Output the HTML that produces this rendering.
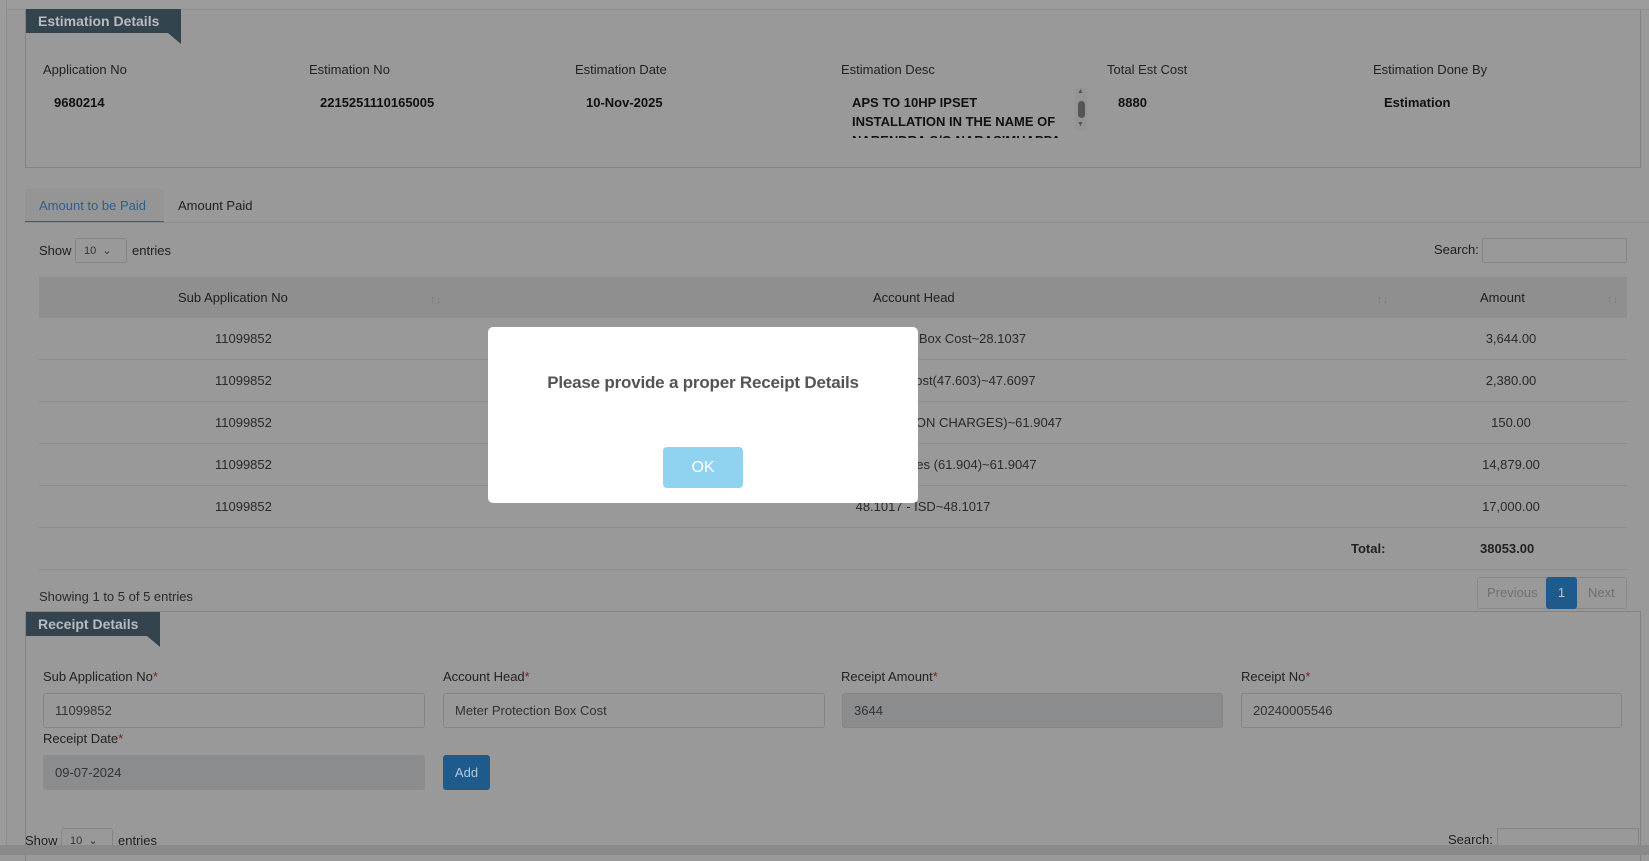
<!DOCTYPE html>
<html><head><meta charset="utf-8"><style>
*{box-sizing:border-box;margin:0;padding:0}
body{width:1649px;height:855px;overflow:hidden;background:#999;font-family:"Liberation Sans",sans-serif;font-size:13px;color:#1e1e1e;position:relative}
.a{position:absolute}
.hdr{background:#34444f;color:#b8bcc0;font-weight:bold;font-size:14px;padding:1px 12px;height:24px;line-height:22px}
.tri{width:0;height:0;border-top:11px solid #34444f;border-left:13px solid transparent}
.lbl{font-size:13px;color:#222}
.val{font-weight:bold;font-size:13px;color:#111}
.inp{border:1px solid #858585;border-radius:3px;height:35px;line-height:33px;padding-left:11px;color:#333;font-size:13px}
.dis{background:#8b8c8e}
.req{color:#8a1a1a}
.row{border-bottom:1px solid #8c8c8c}
.cell{color:#2a2a2a}
.ah{position:absolute;left:620px;width:528px;text-align:center;top:13px;color:#2a2a2a}
.am{position:absolute;left:1400px;width:144px;text-align:center;top:13px;color:#2a2a2a}
.sort{color:#7a7a7a;font-size:11px}
</style></head><body>
<div class="a" style="left:0;top:0;width:1649px;height:10px;background:#9c9c9c;border-bottom:1px solid #8e8e8e"></div>
<div class="a" style="left:0;top:0;width:7px;height:855px;background:#9c9c9c;border-right:1px solid #8e8e8e"></div>

<div class="a" style="left:25px;top:10px;width:1616px;height:158px;border:1px solid #838383;border-top:none"></div>
<div class="a hdr" style="left:26px;top:9px;width:155px">Estimation Details</div>
<div class="a tri" style="left:168px;top:33px"></div>

<div class="a lbl" style="left:43px;top:62px">Application No</div>
<div class="a lbl" style="left:309px;top:62px">Estimation No</div>
<div class="a lbl" style="left:575px;top:62px">Estimation Date</div>
<div class="a lbl" style="left:841px;top:62px">Estimation Desc</div>
<div class="a lbl" style="left:1107px;top:62px">Total Est Cost</div>
<div class="a lbl" style="left:1373px;top:62px">Estimation Done By</div>
<div class="a val" style="left:54px;top:95px">9680214</div>
<div class="a val" style="left:320px;top:95px">2215251110165005</div>
<div class="a val" style="left:586px;top:95px">10-Nov-2025</div>
<div class="a val" style="left:852px;top:93px;width:210px;height:45px;overflow:hidden;line-height:19px">APS TO 10HP IPSET INSTALLATION IN THE NAME OF NARENDRA S/O NARASIMHAPPA</div>
<div class="a" style="left:1075px;top:88px;width:12px;height:42px;background:#949494"></div>
<div class="a" style="left:1077px;top:88px;color:#555;font-size:7px">▲</div>
<div class="a" style="left:1078px;top:101px;width:7px;height:17px;background:#555;border-radius:4px"></div>
<div class="a" style="left:1077px;top:121px;color:#555;font-size:7px">▼</div>
<div class="a val" style="left:1118px;top:95px">8880</div>
<div class="a val" style="left:1384px;top:95px">Estimation</div>

<div class="a" style="left:25px;top:189px;width:139px;height:34px;background:#959595;border-bottom:2px solid #2d5f8f"></div>
<div class="a" style="left:39px;top:198px;color:#2d5f8f">Amount to be Paid</div>
<div class="a" style="left:178px;top:198px;color:#222">Amount Paid</div>
<div class="a" style="left:25px;top:222px;width:1624px;height:1px;background:#8c8c8c"></div>

<div class="a" style="left:39px;top:243px">Show</div>
<div class="a" style="left:75px;top:238px;width:52px;height:25px;border:1px solid #858585;border-radius:3px;font-size:11px;color:#333;padding:5px 8px">10 &nbsp;⌄</div>
<div class="a" style="left:132px;top:243px">entries</div>
<div class="a" style="left:1434px;top:242px">Search:</div>
<div class="a" style="left:1482px;top:238px;width:145px;height:25px;border:1px solid #858585;border-radius:2px"></div>

<div class="a" style="left:39px;top:277px;width:1588px;height:41px;background:#8f8f8f"></div>
<div class="a" style="left:178px;top:290px">Sub Application No</div>
<div class="a sort" style="left:430px;top:294px">↑↓</div>
<div class="a" style="left:873px;top:290px">Account Head</div>
<div class="a sort" style="left:1377px;top:294px">↑↓</div>
<div class="a" style="left:1480px;top:290px">Amount</div>
<div class="a sort" style="left:1607px;top:294px">↑↓</div>

<div class="a" style="left:39px;top:318px;width:1588px">
 <div class="row" style="height:42px;position:relative"><span class="a cell" style="left:176px;top:13px">11099852</span><span class="ah">Meter Protection Box Cost~28.1037</span><span class="am">3,644.00</span></div>
 <div class="row" style="height:42px;position:relative"><span class="a cell" style="left:176px;top:13px">11099852</span><span class="ah">47.6097 - Meter Cost(47.603)~47.6097</span><span class="am">2,380.00</span></div>
 <div class="row" style="height:42px;position:relative"><span class="a cell" style="left:176px;top:13px">11099852</span><span class="ah">61.9047 - (SUPERVISION CHARGES)~61.9047</span><span class="am">150.00</span></div>
 <div class="row" style="height:42px;position:relative"><span class="a cell" style="left:176px;top:13px">11099852</span><span class="ah">Supervision Charges (61.904)~61.9047</span><span class="am">14,879.00</span></div>
 <div class="row" style="height:42px;position:relative"><span class="a cell" style="left:176px;top:13px">11099852</span><span class="ah">48.1017 - ISD~48.1017</span><span class="am">17,000.00</span></div>
 <div class="row" style="height:42px;position:relative"><span class="a val" style="left:1312px;top:13px;color:#222">Total:</span><span class="a val" style="left:1441px;top:13px;color:#222">38053.00</span></div>
</div>

<div class="a" style="left:39px;top:589px;color:#2a2a2a">Showing 1 to 5 of 5 entries</div>
<div class="a" style="left:1477px;top:577px;width:150px;height:32px;border:1px solid #888;border-radius:3px"></div>
<div class="a" style="left:1487px;top:585px;color:#707070">Previous</div>
<div class="a" style="left:1546px;top:577px;width:31px;height:32px;background:#1f5a8c;border-radius:3px;color:#b8c8d8;text-align:center;line-height:32px">1</div>
<div class="a" style="left:1588px;top:585px;color:#707070">Next</div>

<div class="a" style="left:25px;top:611px;width:1616px;height:250px;border:1px solid #838383;border-bottom:none"></div>
<div class="a hdr" style="left:26px;top:612px;width:134px">Receipt Details</div>
<div class="a tri" style="left:147px;top:636px"></div>

<div class="a lbl" style="left:43px;top:669px">Sub Application No<span class="req">*</span></div>
<div class="a lbl" style="left:443px;top:669px">Account Head<span class="req">*</span></div>
<div class="a lbl" style="left:841px;top:669px">Receipt Amount<span class="req">*</span></div>
<div class="a lbl" style="left:1241px;top:669px">Receipt No<span class="req">*</span></div>
<div class="a inp" style="left:43px;top:693px;width:382px">11099852</div>
<div class="a inp" style="left:443px;top:693px;width:382px">Meter Protection Box Cost</div>
<div class="a inp dis" style="left:842px;top:693px;width:381px">3644</div>
<div class="a inp" style="left:1241px;top:693px;width:381px">20240005546</div>
<div class="a lbl" style="left:43px;top:731px">Receipt Date<span class="req">*</span></div>
<div class="a inp dis" style="left:43px;top:755px;width:382px;border-color:#8b8c8e">09-07-2024</div>
<div class="a" style="left:443px;top:755px;width:47px;height:35px;background:#1f5a8c;border-radius:3px;color:#b8c8d8;text-align:center;line-height:35px">Add</div>

<div class="a" style="left:25px;top:833px">Show</div>
<div class="a" style="left:61px;top:828px;width:52px;height:25px;border:1px solid #858585;border-radius:3px;font-size:11px;color:#333;padding:5px 8px">10 &nbsp;⌄</div>
<div class="a" style="left:118px;top:833px">entries</div>
<div class="a" style="left:1448px;top:832px">Search:</div>
<div class="a" style="left:1497px;top:828px;width:142px;height:25px;border:1px solid #858585;border-radius:2px"></div>
<div class="a" style="left:0;top:845px;width:1649px;height:10px;background:#8a8a8a"></div>

<div class="a" style="left:488px;top:327px;width:430px;height:176px;background:#fff;border-radius:5px"></div>
<div class="a" style="left:488px;top:373px;width:430px;text-align:center;font-weight:bold;font-size:17px;letter-spacing:-0.2px;color:#545454">Please provide a proper Receipt Details</div>
<div class="a" style="left:663px;top:447px;width:80px;height:41px;background:#8fd3f1;border-radius:4px;color:#fff;font-size:16px;text-align:center;line-height:41px">OK</div>
</body></html>
